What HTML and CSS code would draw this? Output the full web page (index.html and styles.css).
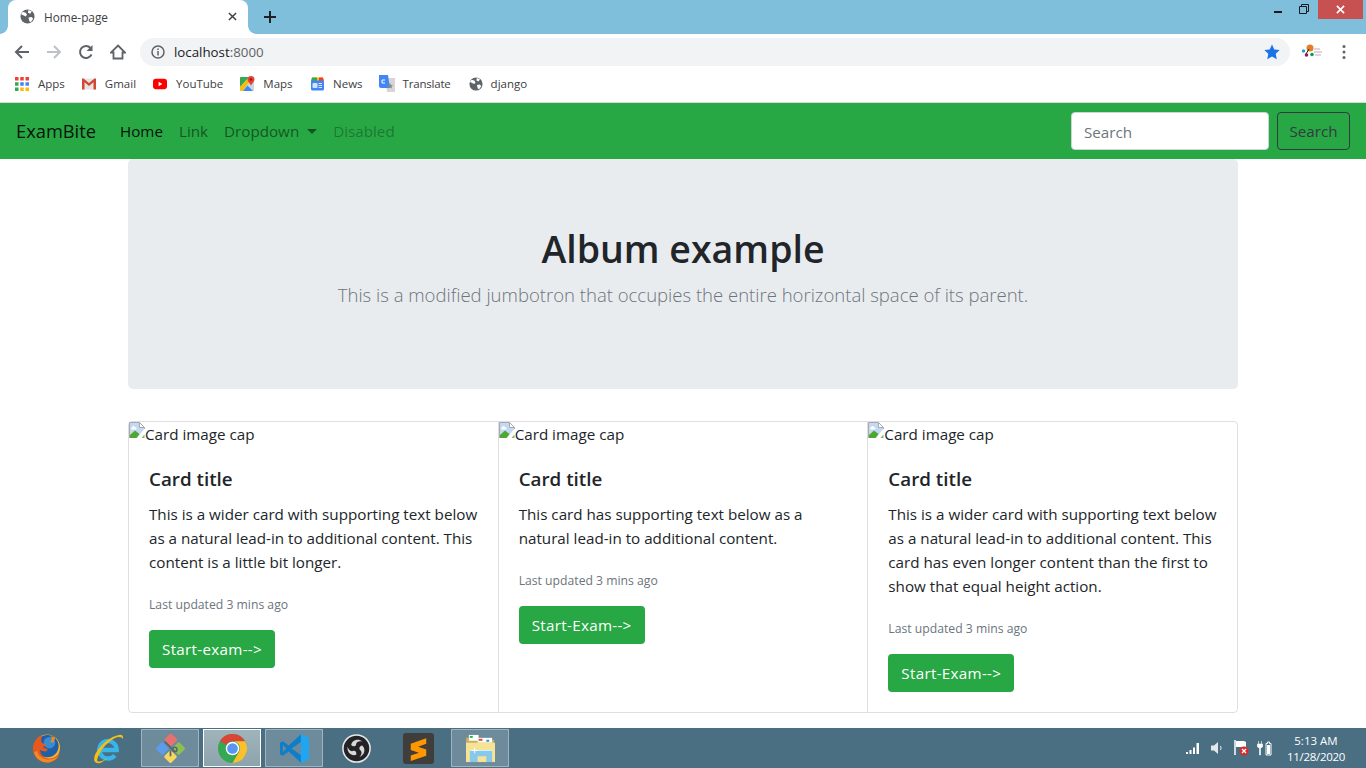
FILE: index.html
```html
<!DOCTYPE html>
<html lang="en">
<head>
<meta charset="utf-8">
<title>Home-page</title>
<link rel="stylesheet" href="styles.css">
</head>
<body>
<div class="tabstrip">
  <div class="tab">
    <svg class="globe" viewBox="0 0 16 16"><circle cx="8" cy="8" r="7.500" fill="#5f6368"/><path d="M3 3l3 1 1.500 2-1.500 2-2-1-3-1.500zM9 1l3.500 1.500-1.500 2.500-2.500-1zM9 9l3.500-.5 1.500 2-2.500 3.500-1.500-1z" fill="#fff"/></svg>
    <span class="tabtitle">Home-page</span>
    <svg class="tabclose" viewBox="0 0 10 10"><path d="M1 1l8 8M9 1l-8 8" stroke="#3c4043" stroke-width="1.600"/></svg>
  </div>
  <svg class="newtab" viewBox="0 0 12 12"><path d="M6 0v12M0 6h12" stroke="#202124" stroke-width="2"/></svg>
  <div class="winctl">
    <svg class="wmin" viewBox="0 0 8 2"><rect width="8" height="2" fill="#1a1a1a"/></svg>
    <svg class="wmax" viewBox="0 0 10 10"><path d="M2.500 2.500V.5h7v7h-2M.5 2.500h7v7h-7z" fill="none" stroke="#1a1a1a"/></svg>
    <div class="wclose"><svg viewBox="0 0 10 10"><path d="M1 1l8 8M9 1l-8 8" stroke="#fff" stroke-width="1.800"/></svg></div>
  </div>
</div>
<div class="toolbar">
  <svg class="tb" viewBox="0 0 16 16"><path d="M15 8H2M8 2L2 8l6 6" fill="none" stroke="#5f6368" stroke-width="2"/></svg>
  <svg class="tb" viewBox="0 0 16 16"><path d="M1 8h13M8 2l6 6-6 6" fill="none" stroke="#bdc1c6" stroke-width="2"/></svg>
  <svg class="tb" viewBox="0 0 16 16"><path d="M13.500 10.500A6 6 0 1 1 12.500 4" fill="none" stroke="#5f6368" stroke-width="2"/><path d="M14.500 1v6h-6z" fill="#5f6368"/></svg>
  <svg class="tb home" viewBox="0 0 16 16"><path d="M8 1.500L15 8.500H12.500V14.500H3.500V8.500H1Z" fill="none" stroke="#5f6368" stroke-width="1.800"/></svg>
  <div class="omnibox">
    <svg class="info" viewBox="0 0 14 14"><circle cx="7" cy="7" r="6" fill="none" stroke="#5f6368" stroke-width="1.500"/><path d="M7 6v4.500M7 3.500v1.500" stroke="#5f6368" stroke-width="1.500"/></svg>
    <span class="url">localhost<span class="port">:8000</span></span>
    <svg class="star" viewBox="0 0 16 16"><path d="M8 .5l2.300 5 5.400.6-4 3.700 1.100 5.400L8 12.500l-4.800 2.700 1.100-5.400-4-3.700 5.400-.6z" fill="#1a73e8"/></svg>
  </div>
  <svg class="ext" viewBox="0 0 22 18"><circle cx="9" cy="5" r="3.500" fill="#e67e22"/><circle cx="2.500" cy="8" r="1.700" fill="#1da1e2"/><circle cx="5.500" cy="12" r="1.800" fill="#8e1e5e"/><circle cx="11" cy="11.500" r="1.800" fill="#0a9d58"/><path d="M13 6h6M13 9h8M14 12h6" stroke="#c9a6b8" stroke-width="1.200"/><path d="M5 11l3-5" stroke="#222"/></svg>
  <svg class="dots" viewBox="0 0 4 16"><circle cx="2" cy="2.500" r="1.500" fill="#5f6368"/><circle cx="2" cy="8" r="1.500" fill="#5f6368"/><circle cx="2" cy="13.500" r="1.500" fill="#5f6368"/></svg>
</div>
<div class="bookmarks">
  <div class="bm"><svg class="bmi" viewBox="0 0 12 12"><rect width="3" height="3" fill="#ea4335"/><rect x="4.500" width="3" height="3" fill="#ea4335"/><rect x="9" width="3" height="3" fill="#ea4335"/><rect y="4.500" width="3" height="3" fill="#34a853"/><rect x="4.500" y="4.500" width="3" height="3" fill="#4285f4"/><rect x="9" y="4.500" width="3" height="3" fill="#4285f4"/><rect y="9" width="3" height="3" fill="#34a853"/><rect x="4.500" y="9" width="3" height="3" fill="#fbbc05"/><rect x="9" y="9" width="3" height="3" fill="#fbbc05"/></svg><span>Apps</span></div>
  <div class="bm"><svg class="bmi" viewBox="0 0 14 11"><path d="M0 0h14v11H0z" fill="#e6e4e1"/><path d="M0 0h1.500L7 4.500 12.500 0H14v11h-2.500V3.800L7 7.500 2.500 3.800V11H0z" fill="#d14836"/></svg><span>Gmail</span></div>
  <div class="bm"><svg class="bmi" viewBox="0 0 15 12"><rect width="15" height="11" y=".5" rx="3" fill="#f00"/><path d="M6 3.500l4 2.500-4 2.500z" fill="#fff"/></svg><span>YouTube</span></div>
  <div class="bm tight"><svg class="bmi bmtall" viewBox="0 0 15 15"><rect y="1" width="14" height="14" rx="1" fill="#c9d6e6"/><path d="M0 2a1 1 0 0 1 1-1h8L0 11z" fill="#34a853"/><path d="M0 11L9.500 1H13L2.500 15H1a1 1 0 0 1-1-1z" fill="#fbbc05"/><path d="M7.500 9.500L13 15H3z" fill="#4285f4"/><path d="M11 0a3.500 3.500 0 0 1 3.500 3.500c0 2-2 3.200-3.500 6-1.500-2.800-3.500-4-3.500-6A3.500 3.500 0 0 1 11 0z" fill="#ea4335"/><circle cx="11" cy="3.500" r="1.200" fill="#8c1c13"/></svg><span>Maps</span></div>
  <div class="bm tighter"><svg class="bmi bmtall" viewBox="0 0 15 14"><path d="M2 1h11l1 4H1z" fill="#fbbc05"/><path d="M2 1h5v4H1z" fill="#34a853"/><path d="M9 1h4l1 4H9z" fill="#ea4335"/><rect x="1" y="4" width="13" height="10" rx="1.500" fill="#4285f4"/><path d="M3 7h4v4H3zM8.500 7H12M8.500 9H12M8.500 11H12" fill="#d2e3fc" stroke="#d2e3fc"/></svg><span>News</span></div>
  <div class="bm translate"><svg class="bmi bmtall2" viewBox="0 0 16 17"><path d="M6 3h10v14H8z" fill="#d6d6d6"/><path d="M0 0h9l2 13H2a2 2 0 0 1-2-2z" fill="#4285f4"/><path d="M11 8l1 2h2l-1.500 1.500.5 2-2-1-2 1 .5-2L8 10h2z" fill="#888"/><path d="M6 5H3v3h3" fill="none" stroke="#fff" stroke-width="1"/></svg><span>Translate</span></div>
  <div class="bm tight"><svg class="bmi" viewBox="0 0 16 16"><circle cx="8" cy="8" r="7.500" fill="#5f6368"/><path d="M3 3l3 1 1.500 2-1.500 2-2-1-3-1.500zM9 1l3.500 1.500-1.500 2.500-2.500-1zM9 9l3.500-.5 1.500 2-2.500 3.500-1.500-1z" fill="#fff"/></svg><span>django</span></div>
</div>
<nav class="navbar">
  <a class="brand">ExamBite</a>
  <a class="navlink active">Home</a>
  <a class="navlink">Link</a>
  <a class="navlink">Dropdown<i class="caret"></i></a>
  <a class="navlink disabled">Disabled</a>
  <form class="navform">
    <input class="search" placeholder="Search">
    <button type="button" class="searchbtn">Search</button>
  </form>
</nav>
<main class="container">
  <section class="jumbotron">
    <h1>Album example</h1>
    <p class="lead">This is a modified jumbotron that occupies the entire horizontal space of its parent.</p>
  </section>
  <section class="cardgroup">
    <article class="card">
      <div class="imgcap"><svg class="broken" viewBox="0 0 16 16"><path d="M1 1h9.500v4.500H16V6L8 16H1z" fill="#c2d8f5"/><path d="M3 5.500a1.500 1.500 0 0 1 3 0 1 1 0 0 1 1 2H3a1 1 0 0 1 0-2z" fill="#fff"/><path d="M1 13l5-4.500 4.500 3.500L7.500 16H1z" fill="#4ea72e"/><path d="M12.500 16l3-3.500V16z" fill="#7fb86a"/><path d="M.5 16V.5h10l5 5v1.500M10.500.5v5h5" fill="none" stroke="#a9a9a9"/></svg><span>Card image cap</span></div>
      <div class="cardbody">
        <h5>Card title</h5>
        <p class="text">This is a wider card with supporting text below as a natural lead-in to additional content. This content is a little bit longer.</p>
        <p class="text meta"><small>Last updated 3 mins ago</small></p>
        <a class="btn">Start-exam--&gt;</a>
      </div>
    </article>
    <article class="card">
      <div class="imgcap"><svg class="broken" viewBox="0 0 16 16"><path d="M1 1h9.500v4.500H16V6L8 16H1z" fill="#c2d8f5"/><path d="M3 5.500a1.500 1.500 0 0 1 3 0 1 1 0 0 1 1 2H3a1 1 0 0 1 0-2z" fill="#fff"/><path d="M1 13l5-4.500 4.500 3.500L7.500 16H1z" fill="#4ea72e"/><path d="M12.500 16l3-3.500V16z" fill="#7fb86a"/><path d="M.5 16V.5h10l5 5v1.500M10.500.5v5h5" fill="none" stroke="#a9a9a9"/></svg><span>Card image cap</span></div>
      <div class="cardbody">
        <h5>Card title</h5>
        <p class="text">This card has supporting text below as a natural lead-in to additional content.</p>
        <p class="text meta"><small>Last updated 3 mins ago</small></p>
        <a class="btn">Start-Exam--&gt;</a>
      </div>
    </article>
    <article class="card">
      <div class="imgcap"><svg class="broken" viewBox="0 0 16 16"><path d="M1 1h9.500v4.500H16V6L8 16H1z" fill="#c2d8f5"/><path d="M3 5.500a1.500 1.500 0 0 1 3 0 1 1 0 0 1 1 2H3a1 1 0 0 1 0-2z" fill="#fff"/><path d="M1 13l5-4.500 4.500 3.500L7.500 16H1z" fill="#4ea72e"/><path d="M12.500 16l3-3.500V16z" fill="#7fb86a"/><path d="M.5 16V.5h10l5 5v1.500M10.500.5v5h5" fill="none" stroke="#a9a9a9"/></svg><span>Card image cap</span></div>
      <div class="cardbody">
        <h5>Card title</h5>
        <p class="text">This is a wider card with supporting text below as a natural lead-in to additional content. This card has even longer content than the first to show that equal height action.</p>
        <p class="text meta"><small>Last updated 3 mins ago</small></p>
        <a class="btn">Start-Exam--&gt;</a>
      </div>
    </article>
  </section>
</main>
<footer class="taskbar">
  <div class="task"><svg viewBox="0 0 32 32"><circle cx="16.500" cy="15" r="13.500" fill="#f5b32a"/><circle cx="17" cy="13.500" r="11.500" fill="#1f5fa8"/><circle cx="19" cy="10" r="6" fill="#3a8bd0"/><path d="M9 3C5 6 1.500 11 2 17c.5 8 7 13.500 14.500 13.500 7 0 12-4.500 13.500-10-3 4-8 6.500-13 5.500-5-1-8-5-7.500-9 1 1.500 3 2 5 2 2 0 3-1.500 2.500-2.500-2-.5-4-1-5-2.500 2 0 3.500-1 3.500-2.500-2.500 0-4-1-5-2.500 0-3 .5-5 .5-6.500z" fill="#e8581c"/><path d="M3 20c2 6 7 10 13.500 10.500 5 0 10-3 12.500-7.500-3 3-8 5-13 4-5-1-9-4-9.500-9z" fill="#f08a24"/><path d="M20 3c2 2 2 4 0 6l3 1 2-5z" fill="#f08a24"/></svg></div>
  <div class="task"><svg viewBox="0 0 32 32"><path d="M7.500 17.500h17A9 9 0 1 0 22.500 23" fill="none" stroke="#38b6ea" stroke-width="4.500"/><path d="M27 2c3-.5 4.500 1 4 4.500-1-2.500-3.500-3-6.500-2C16 8 7 18 4.500 26.500c-.5 2 0 3 1.500 3 3 0 6-2 9-4-4 4-8 6.500-11 5.500-2.500-.5-3.500-3-2.500-6.500C3.500 17 15 4 27 2z" fill="#f6bf17"/></svg></div>
  <div class="task pinned"><svg viewBox="0 0 32 32"><rect x="11.500" y="2" width="10" height="10" rx="1.500" transform="rotate(45 16.500 7)" fill="#e8716d"/><rect x="2.500" y="11" width="10" height="10" rx="1.500" transform="rotate(45 7.500 16)" fill="#5d9cec"/><rect x="19.500" y="11" width="10" height="10" rx="1.500" transform="rotate(45 24.500 16)" fill="#8cc152"/><rect x="11" y="19.500" width="10" height="10" rx="1.500" transform="rotate(45 16 24.500)" fill="#f6d860"/><path d="M10 9l10 10M16 24v-6" stroke="#53666f" stroke-width="1.800"/><circle cx="20.500" cy="17" r="2.200" fill="none" stroke="#53666f" stroke-width="1.500"/></svg></div>
  <div class="task pinned current"><svg viewBox="0 0 32 32"><circle cx="16" cy="16" r="15" fill="#34a853"/><path d="M3 8.500A15 15 0 0 1 29 8.500H16A7.500 7.500 0 0 0 9.500 12.250z" fill="#db4437"/><path d="M29 8.500A15 15 0 0 1 16 31L22.500 19.750A7.500 7.500 0 0 0 16 8.500z" fill="#fbc02d"/><circle cx="16" cy="16" r="7" fill="#fff"/><circle cx="16" cy="16" r="5.500" fill="#5a95f5"/></svg></div>
  <div class="task pinned"><svg viewBox="0 0 32 32"><path d="M23 1L10 13 4 8.500 1 10v12l3 1.500L10 19l13 12V23l-10-7 10-7z" fill="#0f7dc8"/><path d="M4 12.500L7.500 16 4 19.500z" fill="#6f8c9a"/><path d="M22.500 1L31 5v22l-8.500 4z" fill="#22a5f1"/></svg></div>
  <div class="task"><svg viewBox="0 0 32 32"><circle cx="16" cy="16" r="14" fill="#232327" stroke="#e8e8e8" stroke-width="1.600"/><path d="M10.500 12.500C11 7.500 18 5 22 9c-3-1-6 0-6.500 3-.5 2-3 2.500-5 .5z" fill="#d8d8d8"/><path d="M10.500 12.500C11 7.500 18 5 22 9c-3-1-6 0-6.500 3-.5 2-3 2.500-5 .5z" fill="#d8d8d8" transform="rotate(120 16 16)"/><path d="M10.500 12.500C11 7.500 18 5 22 9c-3-1-6 0-6.500 3-.5 2-3 2.500-5 .5z" fill="#d8d8d8" transform="rotate(240 16 16)"/></svg></div>
  <div class="task"><svg viewBox="0 0 32 32"><rect width="32" height="32" rx="3" fill="#403e3b"/><path d="M24 5.500L8 11v6.500l8.500 3L8 23.300V29l16-5.500V17l-8.500-2.800 8.500-3z" fill="#ff9800"/></svg></div>
  <div class="task pinned"><svg viewBox="0 0 32 32"><path d="M1 5h12l2 2h15v8H1z" fill="#c8ad62"/><rect x="4" y="2" width="10" height="6" fill="#fff"/><rect x="5" y="3" width="3" height="2" fill="#1fb141"/><rect x="13" y="5" width="15" height="5" fill="#fff"/><rect x="14" y="6" width="4" height="2" fill="#d94f2b"/><rect x="22" y="7" width="3" height="2" fill="#2e8fd8"/><path d="M1 10h30v20H1z" fill="#f6e395"/><path d="M5 30V18h23v12h-6v-6H13v6z" fill="#86c9ea"/><path d="M5 18h23" stroke="#d8f0fa"/><path d="M10 15v6M7 18h6" stroke="#fff"/></svg></div>
  <div class="tray">
    <svg class="tr1" viewBox="0 0 16 12"><path d="M1 10h2v2H1zM4.500 8h2v4h-2zM8 5.500h2V12H8zM11.500 1h2.500v11h-2.500z" fill="#fff"/></svg>
    <svg class="tr2" viewBox="0 0 14 14"><path d="M1 4.500h3L8 1v12L4 9.500H1z" fill="#e4e8ea"/><path d="M10.500 5q1.200 2 0 4" fill="none" stroke="#e4e8ea"/></svg>
    <svg class="tr3" viewBox="0 0 16 16"><path d="M2 0v15" stroke="#fff" stroke-width="1.500"/><path d="M3 1h8l2 1v5H3z" fill="#fff"/><circle cx="11" cy="11" r="4.500" fill="#d92b2b"/><path d="M9 9l4 4M13 9l-4 4" stroke="#fff" stroke-width="1.300"/></svg>
    <svg class="tr4" viewBox="0 0 16 16"><path d="M1.500 1v3M4.500 1v3M.5 4h5v3l-2 1v7h-1V8l-2-1z" fill="#fff" stroke="#fff" stroke-width=".6"/><path d="M9 3.500h1.500V2h2v1.500H14v11.500H9z" fill="none" stroke="#fff"/><rect x="10" y="5" width="3" height="9" fill="#fff"/></svg>
    <div class="clock"><span>5:13 AM</span><span class="date">11/28/2020</span></div>
  </div>
</footer>
</body>
</html>
```
FILE: styles.css
```css
* { box-sizing: border-box; }
html, body { margin: 0; padding: 0; }
body {
  width: 1366px;
  height: 768px;
  overflow: hidden;
  display: flex;
  flex-direction: column;
  font-family: "Open Sans", "Noto Sans", sans-serif;
  font-size: 15.200px;
  line-height: 24px;
  color: #212529;
  background: #fff;
}
.tabstrip { height: 34px; background: #7fbfdb; display: flex; align-items: flex-start; flex: none; padding-left: 8px; }
.tab { position: relative; width: 240px; height: 34px; background: #fff; border-radius: 8px 8px 0 0; display: flex; align-items: center; padding: 0 11px 1px 12px; }
.tab::before, .tab::after { content: ""; position: absolute; bottom: 0; width: 8px; height: 8px; }
.tab::before { left: -8px; background: radial-gradient(circle at 0 0, transparent 7.500px, #fff 8px); }
.tab::after { right: -8px; background: radial-gradient(circle at 100% 0, transparent 7.500px, #fff 8px); }
.globe { width: 15px; height: 15px; flex: none; }
.tabtitle { margin-left: 9px; font-size: 11.800px; color: #3c4043; flex: 1; }
.tabclose { width: 9px; height: 9px; flex: none; }
.newtab { width: 12px; height: 12px; margin: 11px 0 0 16px; flex: none; }
.winctl { margin-left: auto; display: flex; align-items: flex-start; }
.wmin { width: 8px; height: 2px; margin: 11px 0 0 0; }
.wmax { width: 10px; height: 10px; margin: 4px 0 0 17px; }
.wclose { width: 45px; height: 19px; margin: 0 3px 0 9px; background: #c75050; display: flex; align-items: center; justify-content: center; }
.wclose svg { width: 9px; height: 9px; }
.toolbar { height: 34px; flex: none; display: flex; align-items: center; padding: 2px 0 0 14px; background: #fff; }
.tb { width: 16px; height: 16px; flex: none; margin-right: 16px; }
.tb.home { margin-right: 14px; }
.omnibox { width: 1150px; height: 28px; background: #f1f3f4; border-radius: 14px; display: flex; align-items: center; padding: 0 10px 0 11px; flex: none; }
.info { width: 14px; height: 14px; flex: none; }
.url { margin-left: 9px; font-size: 13.300px; color: #202124; flex: 1; }
.port { color: #5f6368; }
.star { width: 16px; height: 16px; flex: none; }
.ext { width: 22px; height: 18px; margin-left: 11px; flex: none; }
.dots { width: 4px; height: 16px; margin-left: 19px; flex: none; }
.bookmarks { height: 35px; flex: none; display: flex; align-items: center; padding: 0 0 3px 15px; gap: 17px; border-bottom: 1px solid #d8dadd; font-size: 11.500px; color: #3c4043; }
.bm { display: flex; align-items: center; gap: 9px; }
.bm.tight { gap: 8px; }
.bm.tighter { gap: 8.500px; margin-right: -1px; }
.bm.translate { gap: 8px; letter-spacing: -.2px; margin-right: 1px; }
.bmi { width: 14px; height: 14px; flex: none; }
.bmi.bmtall { width: 15px; height: 15px; }
.bmi.bmtall2 { width: 16px; height: 17px; }
.navbar { height: 56px; flex: none; background: #28a745; display: flex; align-items: center; padding: 0 16px; }
.brand { font-size: 18.300px; line-height: 30px; color: rgba(0,0,0,.9); margin-right: 16px; }
.navlink { padding: 8px; color: rgba(0,0,0,.5); white-space: nowrap; }
.navlink.active { color: rgba(0,0,0,.9); }
.navlink.disabled { color: rgba(0,0,0,.3); }
.caret { display: inline-block; margin-left: 8px; vertical-align: 3px; border-top: 5px solid; border-left: 5px solid transparent; border-right: 5px solid transparent; }
.navform { margin-left: auto; display: flex; gap: 8px; }
.search { width: 198px; height: 38px; padding: 7px 12px 5px; border: 1px solid #ced4da; border-radius: 4px; font: inherit; background: #fff; }
.search::placeholder { color: #6c757d; opacity: 1; }
.searchbtn { width: 73px; height: 38px; padding: 0; border: 1px solid #343a40; border-radius: 4px; background: transparent; color: #343a40; font: inherit; }
.container { width: 1110px; margin: 0 auto; flex: none; }
.jumbotron { height: 230px; background: #e9ecef; border-radius: 5px; text-align: center; padding: 66px 32px 0; margin-bottom: 32px; }
h1 { margin: 0 0 7px; font-size: 37.500px; line-height: 48px; font-weight: 600; color: #212529; }
.lead { margin: 0; font-size: 18.530px; line-height: 30px; font-weight: 300; color: #6c757d; }
.cardgroup { display: flex; height: 292px; border: 1px solid rgba(0,0,0,.125); border-radius: 4px; }
.card { flex: 1; display: flex; flex-direction: column; border-left: 1px solid rgba(0,0,0,.125); }
.card:first-child { border-left: 0; }
.imgcap { display: flex; align-items: flex-start; height: 24px; }
.broken { width: 16px; height: 16px; flex: none; }
.cardbody { padding: 20px; }
h5 { margin: 0 0 11px; padding-top: 1px; font-size: 18.800px; line-height: 24px; font-weight: 600; color: #212529; }
.text { margin: 0 0 16px; }
.text.meta { height: 24px; line-height: 26px; }
small { font-size: 12.200px; color: #6c757d; }
.btn { display: inline-block; height: 38px; padding: 0 13px; line-height: 38px; letter-spacing: .3px; background: #28a745; color: #fff; border-radius: 4px; }
.taskbar { position: fixed; left: 0; bottom: 0; width: 1366px; height: 40px; background: #4a6e82; display: flex; align-items: center; gap: 4px; padding-left: 17px; }
.task { width: 58px; height: 38px; display: flex; align-items: center; justify-content: center; flex: none; }
.task svg { width: 31px; height: 31px; }
.pinned { background: rgba(255,255,255,.2); border: 1px solid rgba(255,255,255,.35); }
.current { background: linear-gradient(#9fb3bb, #8ea4ad); border-color: #fff; }
.tray { margin-left: auto; display: flex; align-items: center; color: #fff; padding-right: 21px; }
.tr1 { width: 16px; height: 12px; }
.tr2 { width: 14px; height: 14px; margin-left: 9px; }
.tr3 { width: 16px; height: 16px; margin-left: 9px; }
.tr4 { width: 16px; height: 16px; margin-left: 8px; }
.clock { display: flex; flex-direction: column; align-items: center; margin-left: 14px; padding-top: 1px; font-size: 11.500px; line-height: 16px; }
.date { letter-spacing: -.3px; }
```
